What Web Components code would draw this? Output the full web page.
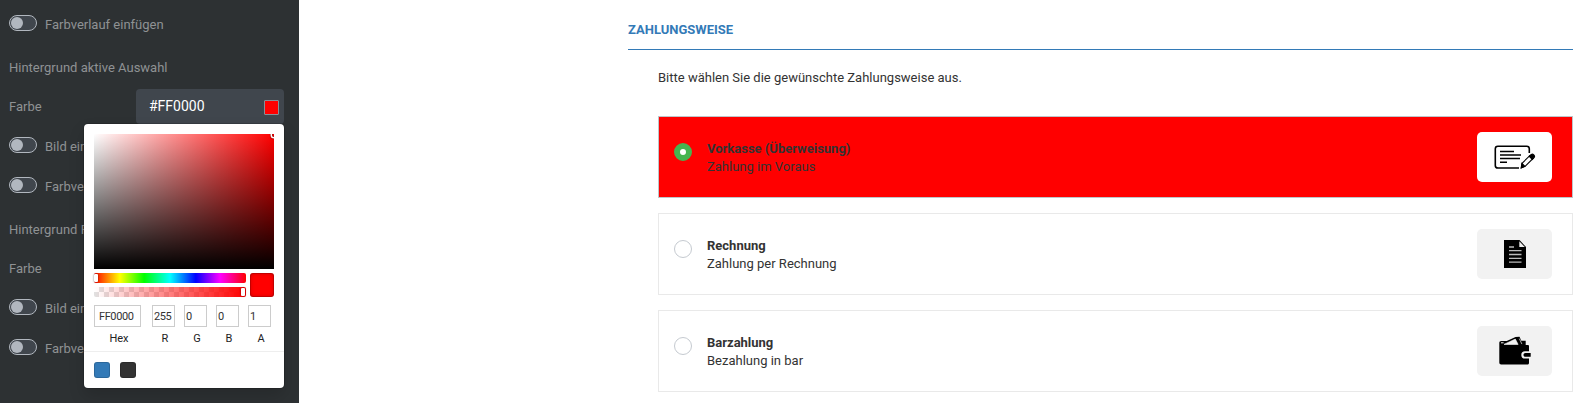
<!DOCTYPE html>
<html lang="de"><head><meta charset="utf-8"><title>Zahlungsweise</title>
<style>body{margin:0;background:#fff;font:13px/18px Roboto,sans-serif;color:#333;overflow:hidden}</style></head>
<body>
<checkout-designer></checkout-designer>
<script>
const define = (name, html) => {
  const t = document.createElement('template');
  t.innerHTML = html;
  customElements.define(name, class extends HTMLElement {
    constructor() { super(); this.attachShadow({mode: 'open'}).append(t.content.cloneNode(true)); }
  });
};

define('toggle-row', `<style>
:host{display:flex;height:16px;margin:0 0 24px 9px;gap:8px;align-items:flex-start}
i{box-sizing:border-box;flex:none;width:28px;height:16px;border:1px solid #b1b7bf;border-radius:8px;background:#40464d;padding:1px}
i::before{content:"";display:block;width:12px;height:12px;border-radius:50%;background:#b1b7bf}
span{line-height:20px;white-space:nowrap}
</style><i></i><span><slot></slot></span>`);

define('section-label', `<style>:host{display:block;height:20px;line-height:20px;margin-left:9px;white-space:nowrap}</style><slot></slot>`);

define('color-field', `<style>
:host{display:flex;height:35px;margin:0 15px 13px 9px;align-items:flex-start;justify-content:space-between}
label{line-height:35px}
div{box-sizing:border-box;width:148px;height:35px;border-radius:4px;background:#40464d;display:flex;align-items:center;justify-content:space-between;padding:0 5px 0 13px;color:#fff;font-size:14px;line-height:34px}
span{margin-top:-2px}
i{box-sizing:border-box;width:15px;height:15px;background:red;border:1px solid #888f97;border-radius:1px;margin-top:2px}
</style><label>Farbe</label><div><span><slot></slot></span><i></i></div>`);

define('picker-input', `<style>
:host{display:block;text-align:center;font-size:11px;color:#222}
div{box-sizing:border-box;height:22px;line-height:24px;box-shadow:inset 0 0 0 1px #ccc;text-align:left;padding-left:var(--pad,2px);letter-spacing:-.4px;color:#333}
span{display:block;line-height:14px;padding:5px 0 0 4px;margin-right:-1px}
</style><div><slot></slot></div><span><slot name="label"></slot></span>`);

define('color-picker', `<style>
:host{display:block;box-sizing:border-box;width:200px;height:264px;background:#fff;border-radius:4px;padding-top:10px;box-shadow:0 0 0 1px rgba(0,0,0,.15),0 8px 16px rgba(0,0,0,.15);color:#222}
.sat{height:135px;margin:0 10px;background:linear-gradient(to top,#000,transparent),linear-gradient(to right,#fff,rgba(255,255,255,0)),red;overflow:hidden;position:relative}
.sat i{position:absolute;left:177.5px;top:-1.5px;width:4px;height:4px;border-radius:50%;box-shadow:0 0 0 1.5px #fff,inset 0 0 1px 1px rgba(0,0,0,.3),0 0 1px 2px rgba(0,0,0,.4)}
.mid{display:flex;gap:4px;margin:4px 10px 0}
.bars{width:152px;display:grid;gap:4px}
.hue,.alpha{height:10px;border-radius:2px;display:flex}
.hue{background:linear-gradient(to right,red,#ff0 17%,#0f0 33%,#0ff 50%,#00f 67%,#f0f 83%,red)}
.alpha{background:linear-gradient(to right,rgba(255,0,0,0),red),repeating-conic-gradient(#fff 0 25%,#e1e1e1 0 50%) 5px 0/10px 10px;justify-content:flex-end}
b{width:4px;height:8px;margin:1px 0 0 0;border-radius:1px;background:#fff;box-shadow:0 0 2px rgba(0,0,0,.6)}
.alpha b{margin-right:1px}
.chip{width:24px;height:24px;border-radius:3px;background:red;box-shadow:inset 0 0 0 1px rgba(0,0,0,.15),inset 0 0 4px rgba(0,0,0,.25)}
.in{display:grid;grid-template-columns:49px repeat(4,23px);column-gap:9px;height:46px;margin:8px 10px 0}
.in :first-child{margin-right:2px;--pad:5px}
.presets{display:flex;gap:10px;border-top:1px solid #eee;padding:10px}
.presets i{width:16px;height:16px;border-radius:3px;background:#337ab7;box-shadow:inset 0 0 0 1px rgba(0,0,0,.15)}
.presets i+i{background:#333}
</style>
<div class="sat"><i></i></div>
<div class="mid"><div class="bars"><div class="hue"><b></b></div><div class="alpha"><b></b></div></div><div class="chip"></div></div>
<div class="in"><picker-input>FF0000<span slot="label">Hex</span></picker-input><picker-input>255<span slot="label">R</span></picker-input><picker-input>0<span slot="label">G</span></picker-input><picker-input>0<span slot="label">B</span></picker-input><picker-input>1<span slot="label">A</span></picker-input></div>
<div class="presets"><i></i><i></i></div>`);

define('style-sidebar', `<style>
:host{display:block;box-sizing:border-box;width:299px;height:403px;padding-top:15px;background:#2d3133;color:#8f9294;position:relative;overflow:hidden}
.a{margin-top:27px}.b{margin-top:11px}
color-picker{position:absolute;left:84px;top:124px}
</style>
<toggle-row>Farbverlauf einfügen</toggle-row>
<section-label class="a">Hintergrund aktive Auswahl</section-label>
<color-field class="b">#FF0000</color-field>
<toggle-row>Bild einfügen</toggle-row><toggle-row>Farbverlauf einfügen</toggle-row>
<section-label class="a">Hintergrund Fehler</section-label>
<color-field class="b">#FFFFFF</color-field>
<toggle-row>Bild einfügen</toggle-row><toggle-row>Farbverlauf einfügen</toggle-row>
<color-picker></color-picker>`);

define('payment-option', `<style>
:host{box-sizing:border-box;display:flex;height:82px;border:1px solid #e9e9e9;padding:15px 20px 0 15px;align-items:flex-start}
:host([checked]){background:red;border-color:#bfc5c9}
.radio{box-sizing:border-box;width:18px;height:18px;margin:11px 15px 0 0;border:1px solid #c5cad0;border-radius:50%;background:#fff}
:host([checked]) .radio{border:6px solid #46b450}
.text{flex:1;padding-top:8px}
::slotted(strong){display:block;font-weight:700}
.tile{width:75px;height:50px;border-radius:5px;background:#f2f2f2}
:host([checked]) .tile{background:#fff}
</style><div class="radio"></div><div class="text"><slot></slot></div><div class="tile"><slot name="icon"></slot></div>`);

define('payment-section', `<style>
:host{display:block;padding:21px 22px 0 329px;flex:1}
h2{margin:0;font-size:13px;line-height:18px;font-weight:700;color:#337ab7;padding-bottom:10px;border-bottom:1px solid #337ab7}
p{margin:19px 0 29px 30px;line-height:18px}
.list{display:grid;gap:15px;margin-left:30px}
svg{display:block}
</style>
<h2>ZAHLUNGSWEISE</h2>
<p>Bitte wählen Sie die gewünschte Zahlungsweise aus.</p>
<div class="list">
<payment-option checked><strong>Vorkasse (Überweisung)</strong>Zahlung im Voraus
<svg slot="icon" width="75" height="50" fill="none" stroke="#000" stroke-width="1.6"><path d="M52.3 21v-4.2a2.6 2.6 0 0 0-2.6-2.6H20.9a2.6 2.6 0 0 0-2.6 2.6v16.6a2.6 2.6 0 0 0 2.6 2.6H42"/><path d="M23 19.5h14M23 23h21M23 26.5h20M23 30.3h7"/><path d="M45 31.3l8.3-8.1 3 3-8.2 8.2-3.8 1.4z" stroke-width="1.1"/><path d="M52.3 24.2l2.2-1.8c1.3-1 3.8 1.6 2.7 2.9l-1.9 2zM45 31.5l2.7 2.7-3.4 1.5z" fill="#000" stroke-width="1.2"/></svg></payment-option>
<payment-option><strong>Rechnung</strong>Zahlung per Rechnung
<svg slot="icon" width="75" height="50"><path d="M27 11h15.5l6.5 7v21H27z"/><path d="M42.3 12.2V18h5.5z" fill="#eee"/><path d="M32 18h5M32 21.7h12.5M32 25.5h12.5M32 29.4h12.5M32 33.2h12.5" stroke="#bbb" stroke-width="1.3"/></svg></payment-option>
<payment-option><strong>Barzahlung</strong>Bezahlung in bar
<svg slot="icon" width="75" height="50"><path d="M22.3 17c0-1.2.8-1.9 2-1.9h5.5L38.5 11l4-.2 1.8 4h4.4V19h2.2c.8 0 1.1.6 1.1 1.3v4.9h-4a3.6 3.6 0 0 0 0 7.4h4v4.5c0 .9-.6 1.5-1.5 1.5H24.2c-1.2 0-1.9-.8-1.9-2z"/><path d="M27 18.4l11.3-5.3 2.8 5.3zM42.3 12.6l2.6 5.5" fill="#f2f2f2" stroke="#f2f2f2" stroke-width=".7"/><path d="M24 16.8h2.6" stroke="#f2f2f2"/><path d="M53.7 27h-5.2c-2.7 0-2.7 3.8 0 3.8h5.2z"/></svg></payment-option>
</div>`);

define('checkout-designer', `<style>:host{display:flex;height:403px;overflow:hidden}</style><style-sidebar></style-sidebar><payment-section></payment-section>`);
</script></body></html>
